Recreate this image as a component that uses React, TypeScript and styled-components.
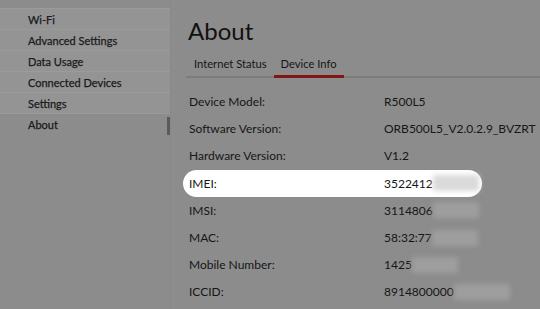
import React from "react";
import { styled, createGlobalStyle } from "styled-components";

const GlobalStyle = createGlobalStyle`
  html, body {
    margin: 0;
    padding: 0;
    background: #8c8c8c;
  }
  body {
    font-family: Lato, "Liberation Sans", sans-serif;
    color: #151515;
  }
`;

const menu = ["Wi-Fi", "Advanced Settings", "Data Usage", "Connected Devices", "Settings", "About"];

type Info = { label: string; value: string; hidden?: number; highlight?: boolean };

const rows: Info[] = [
  { label: "Device Model:", value: "R500L5" },
  { label: "Software Version:", value: "ORB500L5_V2.0.2.9_BVZRT" },
  { label: "Hardware Version:", value: "V1.2" },
  { label: "IMEI:", value: "3522412", hidden: 46, highlight: true },
  { label: "IMSI:", value: "3114806", hidden: 46 },
  { label: "MAC:", value: "58:32:77", hidden: 46 },
  { label: "Mobile Number:", value: "1425", hidden: 46 },
  { label: "ICCID:", value: "8914800000", hidden: 56 },
];

export default function App() {
  return (
    <Page>
      <GlobalStyle />
      <Sidebar>
        {menu.map((m) => (
          <MenuItem key={m} active={m === "About"}>
            {m}
            {m === "About" && <ScrollMark />}
          </MenuItem>
        ))}
      </Sidebar>
      <Main>
        <Title>About</Title>
        <Tabs>
          <Tab>Internet Status</Tab>
          <Tab active>Device Info</Tab>
        </Tabs>
        <List>
          {rows.map((r) => (
            <Row key={r.label} highlight={r.highlight}>
              <Label>{r.label}</Label>
              <Value>
                {r.value}
                {r.hidden && <Blur light={r.highlight} style={{ width: r.hidden }} />}
              </Value>
            </Row>
          ))}
        </List>
      </Main>
    </Page>
  );
}

const Page = styled.div`
  display: flex;
  width: 540px;
  height: 309px;
  overflow: hidden;
`;

const Sidebar = styled.nav`
  width: 170px;
  flex-shrink: 0;
  padding-top: 8px;
  display: flex;
  flex-direction: column;
  border-right: 1px solid #888;
`;

const MenuItem = styled.div<{ active?: boolean }>`
  position: relative;
  height: 20px;
  border-top: 1px solid ${(p) => (p.active ? "#999" : "#9b9b9b")};
  background: ${(p) => (p.active ? "#8c8c8c" : "#949494")};
  padding-left: 28px;
  font-size: 11px;
  font-weight: 400;
  -webkit-text-stroke: 0.25px #1a1a1a;
  line-height: 21px;
  color: #1a1a1a;
`;

const ScrollMark = styled.span`
  position: absolute;
  right: 0;
  top: 3px;
  width: 3px;
  height: 18px;
  background: #5a5a5a;
`;

const Main = styled.main`
  flex: 1;
  padding-left: 15px;
  display: flex;
  flex-direction: column;
`;

const Title = styled.h1`
  margin: 16px 0 0 2px;
  font-size: 24px;
  font-weight: 400;
  line-height: 30px;
  color: #111;
`;

const Tabs = styled.div`
  margin-top: 6px;
  display: flex;
  border-bottom: 2px solid #7c7c7c;
  height: 24px;
`;

const Tab = styled.div<{ active?: boolean }>`
  padding: 0 7px;
  font-size: 11.2px;
  line-height: 23px;
  color: #161616;
  border-bottom: 3px solid ${(p) => (p.active ? "#821515" : "transparent")};
  margin-bottom: -2px;

  &:first-child {
    padding-left: 8px;
  }
`;

const List = styled.div`
  margin-top: 10px;
  display: flex;
  flex-direction: column;
`;

const Row = styled.div<{ highlight?: boolean }>`
  display: flex;
  align-items: center;
  height: 27.2px;
  width: 299px;
  margin-left: -3px;
  padding-left: 6px;
  box-sizing: border-box;
  border-radius: 14px;
  background: ${(p) => (p.highlight ? "#fff" : "transparent")};
  font-size: 12px;
  color: #161616;
`;

const Label = styled.span`
  width: 195px;
  flex-shrink: 0;
`;

const Value = styled.span`
  display: flex;
  align-items: center;
`;

const Blur = styled.span<{ light?: boolean }>`
  display: inline-block;
  height: 16px;
  background: ${(p) => (p.light ? "#dadada" : "#9e9e9e")};
  filter: blur(2.5px);
`;
